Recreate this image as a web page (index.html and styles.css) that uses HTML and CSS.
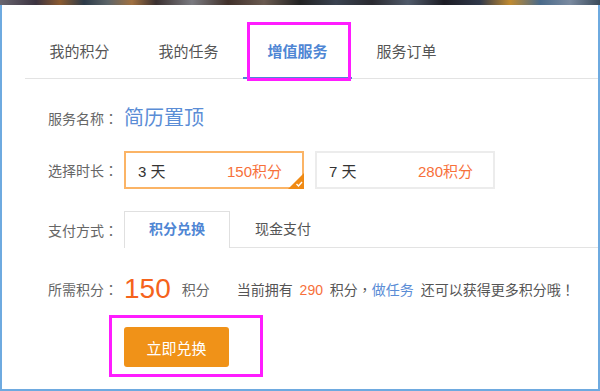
FILE: index.html
```html
<!DOCTYPE html>
<html lang="zh-CN">
<head>
<meta charset="utf-8">
<title>增值服务</title>
<link rel="stylesheet" href="styles.css">
</head>
<body>
<div class="strip"></div>
<div class="frame">
  <nav class="tabs">
    <a class="tab">我的积分</a>
    <a class="tab">我的任务</a>
    <a class="tab active">增值服务<span class="mark mark-tab"></span></a>
    <a class="tab">服务订单</a>
  </nav>

  <div class="content">
    <div class="row row-name">
      <span class="label">服务名称<span class="punc" lang="zh-TW">：</span></span>
      <span class="service">简历置顶</span>
    </div>

    <div class="row row-time">
      <span class="label">选择时长<span class="punc" lang="zh-TW">：</span></span>
      <div class="options">
        <div class="option selected">
          <span class="days">3 天</span>
          <span class="cost">150积分</span>
          <svg class="corner" width="16" height="16" viewBox="0 0 16 16"><polygon points="16,0 16,16 0,16" fill="#f08a14"/><polyline points="8.5,11 10.5,13 14,9" fill="none" stroke="#fff" stroke-width="1.4"/></svg>
        </div>
        <div class="option">
          <span class="days">7 天</span>
          <span class="cost">280积分</span>
        </div>
      </div>
    </div>

    <div class="row row-pay">
      <span class="label">支付方式<span class="punc" lang="zh-TW">：</span></span>
      <div class="paytabs">
        <span class="paytab on">积分兑换</span>
        <span class="paytab">现金支付</span>
      </div>
    </div>

    <div class="row row-need">
      <span class="label">所需积分<span class="punc" lang="zh-TW">：</span></span>
      <span class="big">150</span>
      <span class="unit">积分</span>
      <span class="hint">当前拥有 <em class="num">290</em> 积分<span class="punc" lang="zh-TW">，</span><a class="task">做任务</a> 还可以获得更多积分哦<span class="punc" lang="zh-TW">！</span></span>
    </div>

    <div class="row row-btn">
      <div class="btn-wrap">
        <button class="btn">立即兑换</button>
        <span class="mark mark-btn"></span>
      </div>
    </div>
  </div>
</div>
</body>
</html>
```

FILE: styles.css
```css
* { box-sizing: border-box; }
html, body { margin: 0; padding: 0; }
body {
  width: 600px;
  height: 391px;
  overflow: hidden;
  background: #fff;
  font-family: "Liberation Sans", "Noto Sans CJK SC", sans-serif;
  color: #555;
}
.strip {
  height: 5px;
  background: linear-gradient(90deg, #6a6670 0%, #3b3340 6%, #8a5a30 10%, #2c3a48 14%, #5c6468 18%, #a07040 22%, #3a3030 26%, #7a7a80 32%, #40302a 38%, #6a5a50 44%, #222 50%, #3a4250 56%, #2a2a30 62%, #505a6a 68%, #1c1c24 74%, #30384a 80%, #c08a30 85%, #4a6a8a 90%, #7a8aa0 95%, #3a4a5a 100%);
}
.frame {
  height: 386px;
  border: 2px solid #6eaae0;
  border-top: none;
}
.tabs {
  display: flex;
  margin-left: 23px;
  border-bottom: 1px solid #e3e3e3;
}
.tab {
  position: relative;
  width: 109px;
  padding-top: 37px;
  padding-bottom: 15px;
  text-align: center;
  font-size: 15px;
  line-height: 20px;
  color: #555;
  margin-bottom: -1px;
  border-bottom: 2px solid transparent;
}
.tab.active {
  color: #4f86d4;
  font-weight: bold;
  border-bottom-color: #4f86d4;
}
.mark {
  position: absolute;
  border: 3px solid #ff1cff;
}
.mark-tab {
  left: 4px;
  right: 1px;
  top: 17px;
  bottom: -4px;
}
.punc {
  font-family: "Noto Sans CJK TC", sans-serif;
}
.content {
  padding-left: 46px;
}
.row {
  display: flex;
  align-items: center;
}
.label {
  width: 76px;
  flex: none;
  font-size: 14px;
  line-height: 20px;
  color: #666;
  white-space: nowrap;
}
.row-name { margin-top: 25px; height: 28px; }
.service {
  font-size: 20px;
  line-height: 28px;
  color: #5b8dd6;
}
.row-time { margin-top: 19px; }
.options { display: flex; gap: 11px; }
.option {
  position: relative;
  width: 180px;
  height: 38px;
  border: 2px solid #ececec;
  display: flex;
  align-items: center;
  justify-content: space-between;
  padding: 0 20px 0 12px;
  font-size: 15px;
}
.option.selected { border-color: #fbb466; }
.days { color: #333; }
.cost { color: #f7703a; }
.corner {
  position: absolute;
  right: -2px;
  bottom: -2px;
}
.row-pay { margin-top: 22px; align-items: flex-end; }
.row-pay .label { padding-bottom: 7px; }
.paytabs {
  flex: 1;
  display: flex;
  border-bottom: 1px solid #e3e3e3;
}
.paytab {
  padding: 0 24px;
  height: 36px;
  line-height: 34px;
  font-size: 14px;
  color: #555;
  border: 1px solid transparent;
  border-bottom: none;
}
.paytab.on {
  color: #4f86d4;
  font-weight: bold;
  background: #fff;
  border-color: #e0e0e0;
  height: 37px;
  margin-bottom: -1px;
}
.row-need { margin-top: 24px; height: 34px; }
.big {
  font-size: 28px;
  line-height: 34px;
  color: #f5631c;
  font-family: "Liberation Sans", sans-serif;
}
.unit {
  margin-left: 11px;
  font-size: 14px;
  color: #666;
}
.hint {
  margin-left: 27px;
  font-size: 14px;
  color: #555;
  white-space: nowrap;
  word-spacing: 3px;
}
.num { font-style: normal; color: #f7703a; }
.task { color: #5b8dd6; }
.row-btn { margin-top: 21px; padding-left: 76px; }
.btn-wrap { position: relative; }
.btn {
  display: block;
  width: 105px;
  height: 40px;
  border: none;
  border-radius: 3px;
  background: #f09218;
  color: #fff;
  font-family: "Liberation Sans", "Noto Sans CJK SC", sans-serif;
  font-size: 15px;
  padding: 0;
}
.mark-btn {
  left: -15px;
  right: -34px;
  top: -12px;
  bottom: -10px;
}
```
